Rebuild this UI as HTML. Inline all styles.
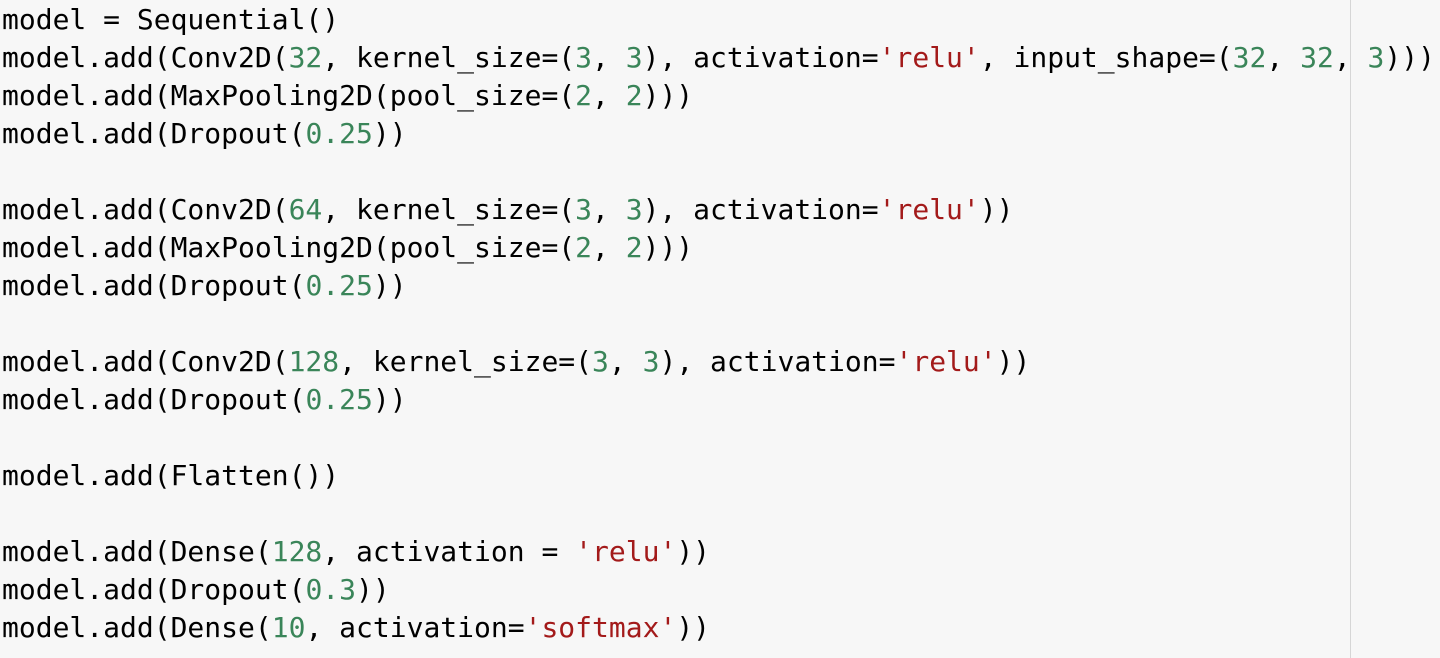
<!DOCTYPE html>
<html><head><meta charset="utf-8"><style>
html,body{margin:0;padding:0;background:#f7f7f7;width:1440px;height:658px;overflow:hidden}
pre{margin:0;position:absolute;left:2px;top:1px;font-family:"DejaVu Sans Mono","Liberation Mono",monospace;font-size:28px;line-height:38px;color:#000}
.n{color:#3a8559}.s{color:#a31a1a}
.v{position:absolute;left:1350px;top:0;width:1px;height:658px;background:#d6d6d6}
</style></head><body>
<div class="v"></div>
<pre>model = Sequential()
model.add(Conv2D(<span class="n">32</span>, kernel_size=(<span class="n">3</span>, <span class="n">3</span>), activation=<span class="s">'relu'</span>, input_shape=(<span class="n">32</span>, <span class="n">32</span>, <span class="n">3</span>)))
model.add(MaxPooling2D(pool_size=(<span class="n">2</span>, <span class="n">2</span>)))
model.add(Dropout(<span class="n">0.25</span>))

model.add(Conv2D(<span class="n">64</span>, kernel_size=(<span class="n">3</span>, <span class="n">3</span>), activation=<span class="s">'relu'</span>))
model.add(MaxPooling2D(pool_size=(<span class="n">2</span>, <span class="n">2</span>)))
model.add(Dropout(<span class="n">0.25</span>))

model.add(Conv2D(<span class="n">128</span>, kernel_size=(<span class="n">3</span>, <span class="n">3</span>), activation=<span class="s">'relu'</span>))
model.add(Dropout(<span class="n">0.25</span>))

model.add(Flatten())

model.add(Dense(<span class="n">128</span>, activation = <span class="s">'relu'</span>))
model.add(Dropout(<span class="n">0.3</span>))
model.add(Dense(<span class="n">10</span>, activation=<span class="s">'softmax'</span>))</pre>
</body></html>
